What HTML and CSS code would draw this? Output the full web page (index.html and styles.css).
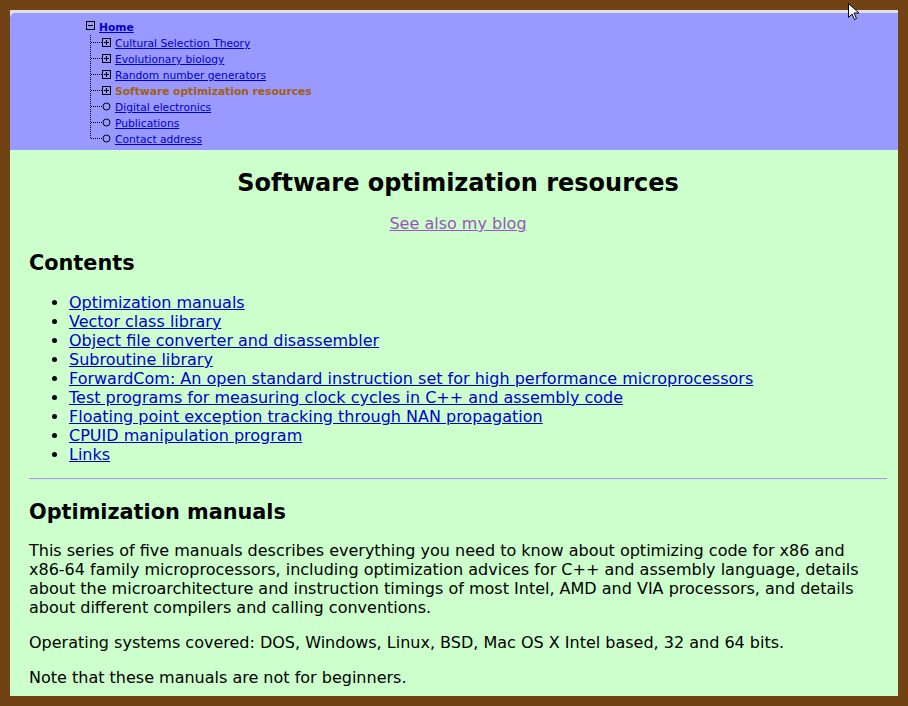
FILE: index.html
```html
<!DOCTYPE html>
<html lang="en">
<head>
<meta charset="utf-8">
<title>Software optimization resources</title>
<link rel="stylesheet" href="styles.css">
</head>
<body>
<div class="frame">
  <div class="navwrap">
    <nav class="topnav">
      <ul class="tree">
        <li class="row root">
          <svg class="ico-root" width="13" height="16" viewBox="0 0 13 16"><rect x="0.5" y="2.5" width="8" height="8" fill="none" stroke="#000"/><path d="M2 6.5h5" stroke="#000"/></svg>
          <a href="#" class="home">Home</a>
        </li>
        <li class="row child">
          <svg class="ico" width="29" height="16" viewBox="0 0 29 16"><path d="M4.5 0v16M5 7.5h11" stroke="#000" stroke-dasharray="1 1"/><rect x="16.5" y="3.5" width="8" height="8" fill="none" stroke="#000"/><path d="M18 7.5h5M20.5 5v5" stroke="#000"/></svg>
          <a href="#">Cultural Selection Theory</a>
        </li>
        <li class="row child">
          <svg class="ico" width="29" height="16" viewBox="0 0 29 16"><path d="M4.5 0v16M5 7.5h11" stroke="#000" stroke-dasharray="1 1"/><rect x="16.5" y="3.5" width="8" height="8" fill="none" stroke="#000"/><path d="M18 7.5h5M20.5 5v5" stroke="#000"/></svg>
          <a href="#">Evolutionary biology</a>
        </li>
        <li class="row child">
          <svg class="ico" width="29" height="16" viewBox="0 0 29 16"><path d="M4.5 0v16M5 7.5h11" stroke="#000" stroke-dasharray="1 1"/><rect x="16.5" y="3.5" width="8" height="8" fill="none" stroke="#000"/><path d="M18 7.5h5M20.5 5v5" stroke="#000"/></svg>
          <a href="#">Random number generators</a>
        </li>
        <li class="row child">
          <svg class="ico" width="29" height="16" viewBox="0 0 29 16"><path d="M4.5 0v16M5 7.5h11" stroke="#000" stroke-dasharray="1 1"/><rect x="16.5" y="3.5" width="8" height="8" fill="none" stroke="#000"/><path d="M18 7.5h5M20.5 5v5" stroke="#000"/></svg>
          <span class="current">Software optimization resources</span>
        </li>
        <li class="row child">
          <svg class="ico" width="29" height="16" viewBox="0 0 29 16"><path d="M4.5 0v16M5 7.5h11" stroke="#000" stroke-dasharray="1 1"/><circle cx="20.5" cy="7.5" r="3.5" fill="none" stroke="#000"/></svg>
          <a href="#">Digital electronics</a>
        </li>
        <li class="row child">
          <svg class="ico" width="29" height="16" viewBox="0 0 29 16"><path d="M4.5 0v16M5 7.5h11" stroke="#000" stroke-dasharray="1 1"/><circle cx="20.5" cy="7.5" r="3.5" fill="none" stroke="#000"/></svg>
          <a href="#">Publications</a>
        </li>
        <li class="row child">
          <svg class="ico" width="29" height="16" viewBox="0 0 29 16"><path d="M4.5 0v8M5 7.5h11" stroke="#000" stroke-dasharray="1 1"/><circle cx="20.5" cy="7.5" r="3.5" fill="none" stroke="#000"/></svg>
          <a href="#">Contact address</a>
        </li>
      </ul>
    </nav>
  </div>
  <main class="content">
    <h1 class="title">Software optimization resources</h1>
    <p class="blog"><a href="#" class="visited">See also my blog</a></p>
    <h2 class="toc-head">Contents</h2>
    <ul class="toc">
      <li><a href="#">Optimization manuals</a></li>
      <li><a href="#">Vector class library</a></li>
      <li><a href="#">Object file converter and disassembler</a></li>
      <li><a href="#">Subroutine library</a></li>
      <li><a href="#">ForwardCom: An open standard instruction set for high performance microprocessors</a></li>
      <li><a href="#">Test programs for measuring clock cycles in C++ and assembly code</a></li>
      <li><a href="#">Floating point exception tracking through NAN propagation</a></li>
      <li><a href="#">CPUID manipulation program</a></li>
      <li><a href="#">Links</a></li>
    </ul>
    <hr class="rule">
    <h2 class="section-head">Optimization manuals</h2>
    <p class="intro">This series of five manuals describes everything you need to know about optimizing code for x86 and x86&#8209;64 family microprocessors, including optimization advices for C++ and assembly language, details about the microarchitecture and instruction timings of most Intel, AMD and VIA processors, and details about different compilers and calling conventions.</p>
    <p>Operating systems covered: DOS, Windows, Linux, BSD, Mac OS X Intel based, 32 and 64 bits.</p>
    <p>Note that these manuals are not for beginners.</p>
  </main>
</div>
<svg class="cursor" width="13" height="19" viewBox="0 0 13 19"><path d="M0.5 0.5v14l3.5-3.5 2.5 5.5 2-1-2.5-5.5h5z" fill="#fff" stroke="#000"/></svg>
</body>
</html>
```

FILE: styles.css
```css
html, body {
  margin: 0;
  padding: 0;
}
body {
  background: #704214;
  padding: 10px;
  height: 706px;
  box-sizing: border-box;
  overflow: hidden;
  font-family: "DejaVu Sans", Verdana, sans-serif;
  color: #000;
}
.frame {
  height: 686px;
  overflow: hidden;
  background: #ccffcc;
}
.navwrap {
  background: #e0e0e0;
  padding-top: 3px;
}
.topnav {
  background: #9999ff;
  border-top-left-radius: 5px;
  height: 137px;
  box-sizing: border-box;
  padding: 6px 0 3px 76px;
}
.tree {
  list-style: none;
  margin: 0;
  padding: 0;
  font-size: 10.7px;
}
.row {
  display: flex;
  align-items: center;
  height: 16px;
  line-height: 16px;
  white-space: nowrap;
}
.row svg {
  display: block;
  flex: none;
}
.row a,
.row .current {
  padding-top: 2px;
}
.tree a {
  color: #0000cc;
}
.tree .home {
  font-weight: bold;
}
.tree .current {
  font-weight: bold;
  color: #a06010;
}
.content {
  padding: 0 11px 0 19px;
  font-size: 16px;
  line-height: 19px;
  overflow: hidden;
}
.content a {
  color: #0000cc;
}
.content a.visited {
  color: #9955bb;
}
.title {
  margin: 18px 0 16px;
  text-align: center;
  font-size: 24px;
  line-height: 30px;
}
.blog {
  text-align: center;
  margin: 0;
}
h2 {
  font-size: 20.8px;
  line-height: 28px;
  margin: 16px 0;
}
.section-head {
  margin: 18px 0 0;
}
.content p {
  margin: 16px 0;
}
.content p.intro {
  margin-top: 15px;
}
.content p.blog {
  margin: 0;
}
.toc {
  margin: 16px 0 0;
  padding-left: 40px;
}
.rule {
  margin: 14px 0 0;
  border: 0;
  border-top: 1px solid #a49cd8;
  border-bottom: 1px solid #d8ecdc;
  height: 0;
}
.cursor {
  position: absolute;
  left: 848px;
  top: 3px;
}
```
